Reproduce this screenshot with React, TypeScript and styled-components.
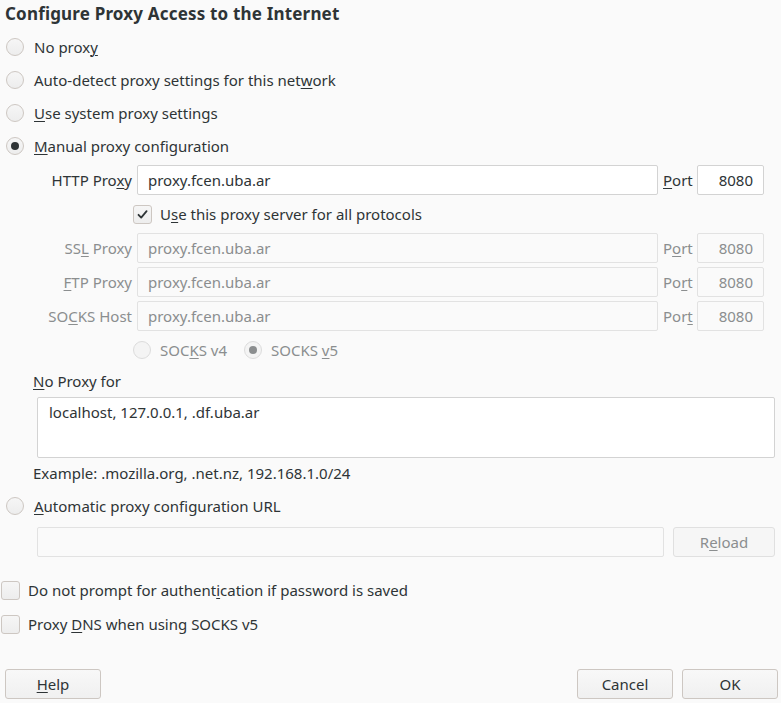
import React from "react";
import styled, { createGlobalStyle, css } from "styled-components";

const Global = createGlobalStyle`
  html, body { margin: 0; padding: 0; background: #fafafa; }
  body { font-family: "Noto Sans", "DejaVu Sans", sans-serif; font-size: 15px; color: #2e3436; }
  * { box-sizing: border-box; }
`;

const Page = styled.div`
  width: 781px;
  height: 703px;
  display: flex;
  flex-direction: column;
  padding-top: 1px;
`;

const Title = styled.div`
  font-size: 17px;
  font-weight: 700;
  letter-spacing: 0.18px;
  height: 29px;
  line-height: 26px;
  padding-left: 5px;
`;

const RadioRow = styled.label<{ $indent?: number }>`
  display: flex;
  align-items: center;
  height: 33px;
  gap: 10px;
  padding-left: ${(p) => p.$indent ?? 6}px;
`;

const RadioCircle = styled.span<{ $checked?: boolean; $disabled?: boolean }>`
  width: 18px;
  height: 18px;
  border-radius: 50%;
  border: 1px solid ${(p) => (p.$disabled ? "#dcdcdc" : "#cdc7c2")};
  background: ${(p) => (p.$disabled ? "#f4f4f4" : "linear-gradient(#f6f6f6, #ededed)")};
  display: flex;
  align-items: center;
  justify-content: center;
  flex: none;
  ${(p) =>
    p.$checked &&
    css`
      &::after {
        content: "";
        width: 8px;
        height: 8px;
        border-radius: 50%;
        background: ${p.$disabled ? "#8b8e8f" : "#2e3436"};
      }
    `}
`;

const Text = styled.span<{ $disabled?: boolean }>`
  color: ${(p) => (p.$disabled ? "#8b8e8f" : "#2e3436")};
  white-space: nowrap;
  u { text-decoration: underline; text-underline-offset: 2px; text-decoration-thickness: 1px; }
`;

const ProxyGrid = styled.div`
  display: grid;
  grid-template-columns: 99px 521px 29px 67px;
  grid-auto-rows: 30px;
  column-gap: 5px;
  row-gap: 4px;
  margin-left: 33px;
  margin-top: 3px;
`;

const FieldLabel = styled(Text)`
  line-height: 30px;
  text-align: right;
`;

const PortLabel = styled(Text)`
  line-height: 30px;
`;

const Field = styled.div<{ $disabled?: boolean; $align?: "left" | "right" }>`
  height: 30px;
  border: 1px solid ${(p) => (p.$disabled ? "#e2e2e2" : "#d3d3d3")};
  border-radius: 2px;
  background: ${(p) => (p.$disabled ? "#fafafa" : "#ffffff")};
  color: ${(p) => (p.$disabled ? "#8b8e8f" : "#2e3436")};
  display: flex;
  align-items: center;
  justify-content: ${(p) => (p.$align === "right" ? "flex-end" : "flex-start")};
  padding: 0 10px 0 10px;
  white-space: nowrap;
`;

const CheckRow = styled.label<{ $height?: number }>`
  display: flex;
  align-items: center;
  gap: 8px;
  height: ${(p) => p.$height ?? 30}px;
`;

const CheckBox = styled.span`
  width: 19px;
  height: 19px;
  border: 1px solid #cdc7c2;
  border-radius: 3px;
  background: linear-gradient(#f6f6f6, #ededed);
  display: flex;
  align-items: center;
  justify-content: center;
  flex: none;
`;

const SpanCols = styled.div<{ $from: number; $to: number }>`
  grid-column: ${(p) => p.$from} / ${(p) => p.$to};
  display: flex;
  align-items: center;
  margin-left: -4px;
`;

const SocksRow = styled.div`
  display: flex;
  align-items: center;
`;

const SocksOption = styled.span<{ $width?: number }>`
  display: flex;
  align-items: center;
  gap: 9px;
  width: ${(p) => (p.$width ? `${p.$width}px` : "auto")};
`;

const SectionLabel = styled(Text)`
  display: block;
  line-height: 30px;
  height: 30px;
  margin-left: 33px;
  margin-top: 1px;
`;

const TextArea = styled.div`
  margin: 1px 6px 0 37px;
  height: 61px;
  background: #ffffff;
  border: 1px solid #d3d3d3;
  border-radius: 2px;
  padding: 3px 11px;
  line-height: 22px;
`;

const Example = styled(Text)`
  display: block;
  line-height: 31px;
  height: 31px;
  margin-left: 33px;
`;

const UrlRow = styled.div`
  display: flex;
  gap: 9px;
  margin: 5px 6px 0 37px;
  height: 30px;
`;

const UrlField = styled(Field)`
  flex: 1;
`;

const Button = styled.button<{ $disabled?: boolean; $width?: number }>`
  width: ${(p) => p.$width ?? 96}px;
  height: 30px;
  font-family: inherit;
  font-size: 15px;
  line-height: 26px;
  border-radius: 3px;
  border: 1px solid ${(p) => (p.$disabled ? "#e0e0e0" : "#cdc7c2")};
  background: ${(p) => (p.$disabled ? "#f6f6f6" : "linear-gradient(#f8f8f8, #f0f0f0)")};
  color: ${(p) => (p.$disabled ? "#8b8e8f" : "#2e3436")};
  padding: 0;
  u { text-decoration: underline; text-underline-offset: 2px; }
`;

const Checks = styled.div`
  display: flex;
  flex-direction: column;
  margin-top: 16px;
  margin-left: 1px;
`;

const Footer = styled.div`
  margin-top: auto;
  margin-bottom: 4px;
  display: flex;
  align-items: center;
  padding: 0 3px 0 5px;
  gap: 9px;
`;

const Spacer = styled.div`
  flex: 1;
`;

const Check = () => (
  <svg width="13" height="13" viewBox="0 0 13 13">
    <path d="M2.5 6.8 L5.2 9.6 L10.6 3.2" fill="none" stroke="#2e3436" strokeWidth="1.8" strokeLinecap="round" strokeLinejoin="round" />
  </svg>
);

export default function App() {
  return (
    <>
      <Global />
      <Page>
        <Title>Configure Proxy Access to the Internet</Title>
        <RadioRow>
          <RadioCircle />
          <Text>No prox<u>y</u></Text>
        </RadioRow>
        <RadioRow>
          <RadioCircle />
          <Text>Auto-detect proxy settings for this net<u>w</u>ork</Text>
        </RadioRow>
        <RadioRow>
          <RadioCircle />
          <Text><u>U</u>se system proxy settings</Text>
        </RadioRow>
        <RadioRow>
          <RadioCircle $checked />
          <Text><u>M</u>anual proxy configuration</Text>
        </RadioRow>

        <ProxyGrid>
          <FieldLabel>HTTP Pro<u>x</u>y</FieldLabel>
          <Field>proxy.fcen.uba.ar</Field>
          <PortLabel><u>P</u>ort</PortLabel>
          <Field $align="right">8080</Field>

          <div />
          <SpanCols $from={2} $to={5}>
            <CheckRow>
              <CheckBox><Check /></CheckBox>
              <Text>U<u>s</u>e this proxy server for all protocols</Text>
            </CheckRow>
          </SpanCols>

          <FieldLabel $disabled>SS<u>L</u> Proxy</FieldLabel>
          <Field $disabled>proxy.fcen.uba.ar</Field>
          <PortLabel $disabled>P<u>o</u>rt</PortLabel>
          <Field $disabled $align="right">8080</Field>

          <FieldLabel $disabled><u>F</u>TP Proxy</FieldLabel>
          <Field $disabled>proxy.fcen.uba.ar</Field>
          <PortLabel $disabled>Po<u>r</u>t</PortLabel>
          <Field $disabled $align="right">8080</Field>

          <FieldLabel $disabled>SO<u>C</u>KS Host</FieldLabel>
          <Field $disabled>proxy.fcen.uba.ar</Field>
          <PortLabel $disabled>Por<u>t</u></PortLabel>
          <Field $disabled $align="right">8080</Field>

          <div />
          <SpanCols $from={2} $to={5}>
            <SocksRow>
              <SocksOption $width={111}>
                <RadioCircle $disabled />
                <Text $disabled>SOC<u>K</u>S v4</Text>
              </SocksOption>
              <SocksOption>
                <RadioCircle $disabled $checked />
                <Text $disabled>SOCKS <u>v</u>5</Text>
              </SocksOption>
            </SocksRow>
          </SpanCols>
        </ProxyGrid>

        <SectionLabel><u>N</u>o Proxy for</SectionLabel>
        <TextArea>localhost, 127.0.0.1, .df.uba.ar</TextArea>
        <Example>Example: .mozilla.org, .net.nz, 192.168.1.0/24</Example>

        <RadioRow>
          <RadioCircle />
          <Text><u>A</u>utomatic proxy configuration URL</Text>
        </RadioRow>
        <UrlRow>
          <UrlField $disabled />
          <Button $disabled $width={102}>R<u>e</u>load</Button>
        </UrlRow>

        <Checks>
          <CheckRow $height={34}>
            <CheckBox />
            <Text>Do not prompt for authent<u>i</u>cation if password is saved</Text>
          </CheckRow>
          <CheckRow $height={34}>
            <CheckBox />
            <Text>Proxy <u>D</u>NS when using SOCKS v5</Text>
          </CheckRow>
        </Checks>

        <Footer>
          <Button><u>H</u>elp</Button>
          <Spacer />
          <Button>Cancel</Button>
          <Button>OK</Button>
        </Footer>
      </Page>
    </>
  );
}
